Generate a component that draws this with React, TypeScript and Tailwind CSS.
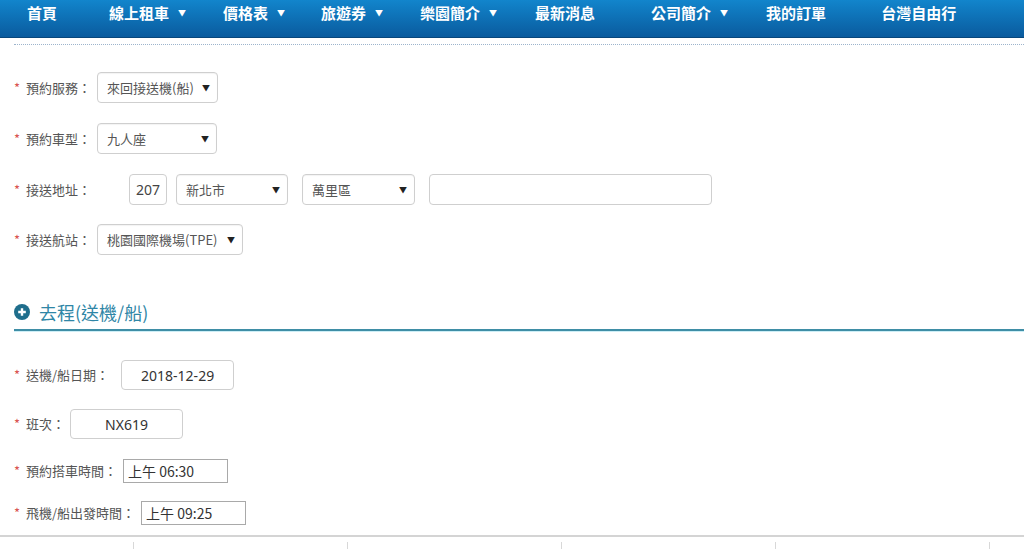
const NAV = [
  { label: "首頁", cls: "ml-[27px]", arrow: false },
  { label: "線上租車", cls: "ml-[52px]", arrow: true },
  { label: "價格表", cls: "ml-[37px]", arrow: true },
  { label: "旅遊券", cls: "ml-[36px]", arrow: true },
  { label: "樂園簡介", cls: "ml-[37px]", arrow: true },
  { label: "最新消息", cls: "ml-[38px]", arrow: false },
  { label: "公司簡介", cls: "ml-[56px]", arrow: true },
  { label: "我的訂單", cls: "ml-[38px]", arrow: false },
  { label: "台灣自由行", cls: "ml-[55px]", arrow: false },
];

const font = "font-['Noto_Sans_CJK_TC','Noto_Sans',sans-serif]";

function Label({ text }: { text: string }) {
  return (
    <div className="flex items-center text-[13px] text-[#555]">
      <span className="w-[12px] text-[#d9534f]">*</span>
      <span>{text}</span>
    </div>
  );
}

function Select({ value, w, cls = "" }: { value: string; w: string; cls?: string }) {
  return (
    <div
      className={`${w} ${cls} flex h-[31px] items-center justify-between rounded-[4px] border border-[#cfcfcf] bg-white pr-[7px] pl-[9px] text-[13px] text-[#555] shadow-[inset_0_1px_1px_rgba(0,0,0,0.05)]`}
    >
      <span>{value}</span>
      <span className="text-[8px] text-[#222]">▼</span>
    </div>
  );
}

function Box({ value, w, cls = "", h = "h-[31px]" }: { value: string; w: string; cls?: string; h?: string }) {
  return (
    <div
      className={`${w} ${h} ${cls} flex items-center justify-center rounded-[4px] border border-[#cfcfcf] bg-white text-[14px] text-[#333] font-['Noto_Sans',sans-serif]`}
    >
      {value}
    </div>
  );
}

function TimeBox({ value, cls }: { value: string; cls: string }) {
  return (
    <div
      className={`${cls} flex h-[24px] w-[105px] items-center border border-[#a9a9a9] bg-white pl-[4px] text-[14px] text-[#333]`}
    >
      {value}
    </div>
  );
}

export default function App() {
  return (
    <div className={`${font} h-[549px] w-[1024px] overflow-hidden bg-white`}>
      {/* Nav */}
      <div className="flex h-[37px] items-start bg-gradient-to-b from-[#1285cc] to-[#0a5b9e] pt-[4px] shadow-[0_1px_0_#08477c]">
        {NAV.map((n) => (
          <div key={n.label} className={`${n.cls} flex items-center text-[15px] leading-[18px] font-bold text-white`}>
            <span>{n.label}</span>
            {n.arrow ? <span className="ml-[9px] text-[8px]">▼</span> : null}
          </div>
        ))}
      </div>

      <div className="mt-[7px] ml-[14px] border-t border-dotted border-[#9db4cc]" />

      <div className="pl-[14px]">
        <div className="mt-[27px] flex items-center">
          <Label text="預約服務：" />
          <Select value="來回接送機(船)" w="w-[121px]" cls="ml-[6px]" />
        </div>

        <div className="mt-[20px] flex items-center">
          <Label text="預約車型：" />
          <Select value="九人座" w="w-[120px]" cls="ml-[6px]" />
        </div>

        <div className="mt-[20px] flex items-center">
          <Label text="接送地址：" />
          <Box value="207" w="w-[38px]" cls="ml-[38px] text-[#444]" />
          <Select value="新北市" w="w-[112px]" cls="ml-[9px]" />
          <Select value="萬里區" w="w-[113px]" cls="ml-[14px]" />
          <div className="ml-[14px] h-[31px] w-[283px] rounded-[4px] border border-[#cfcfcf]" />
        </div>

        <div className="mt-[19px] flex items-center">
          <Label text="接送航站：" />
          <Select value="桃園國際機場(TPE)" w="w-[146px]" cls="ml-[6px]" />
        </div>

        {/* Section header */}
        <div className="mt-[45px] flex items-center border-b-2 border-[#3f8ea6] pb-[5px] shadow-[0_1px_0_#cdeef6]">
          <svg width="16" height="16" viewBox="0 0 16 16">
            <circle cx="8" cy="8" r="8" fill="#1f6e8c" />
            <path d="M8 4.2v7.6M4.2 8h7.6" stroke="#fff" strokeWidth="2.4" />
          </svg>
          <span className="ml-[9px] text-[18px] leading-[24px] text-[#2f86a6]">去程(送機/船)</span>
        </div>

        <div className="mt-[29px] flex items-center">
          <Label text="送機/船日期：" />
          <Box value="2018-12-29" w="w-[113px]" h="h-[30px]" cls="ml-[12px]" />
        </div>

        <div className="mt-[19px] flex items-center">
          <Label text="班次：" />
          <Box value="NX619" w="w-[113px]" h="h-[30px]" cls="ml-[5px]" />
        </div>

        <div className="mt-[20px] flex items-center">
          <Label text="預約搭車時間：" />
          <TimeBox value="上午 06:30" cls="ml-[6px]" />
        </div>

        <div className="mt-[18px] flex items-center">
          <Label text="飛機/船出發時間：" />
          <TimeBox value="上午 09:25" cls="ml-[6px]" />
        </div>
      </div>

      {/* Footer */}
      <div className="mt-[10px] border-t-2 border-[#d4d4d4]">
        <div className="flex pt-[5px] pl-[133px]">
          <div className="h-[12px] w-[214px] border-l border-[#d8d8d8]" />
          <div className="h-[12px] w-[214px] border-l border-[#d8d8d8]" />
          <div className="h-[12px] w-[214px] border-l border-[#d8d8d8]" />
          <div className="h-[12px] w-[214px] border-l border-[#d8d8d8]" />
          <div className="h-[12px] w-[20px] border-l border-[#d8d8d8]" />
        </div>
      </div>
    </div>
  );
}
